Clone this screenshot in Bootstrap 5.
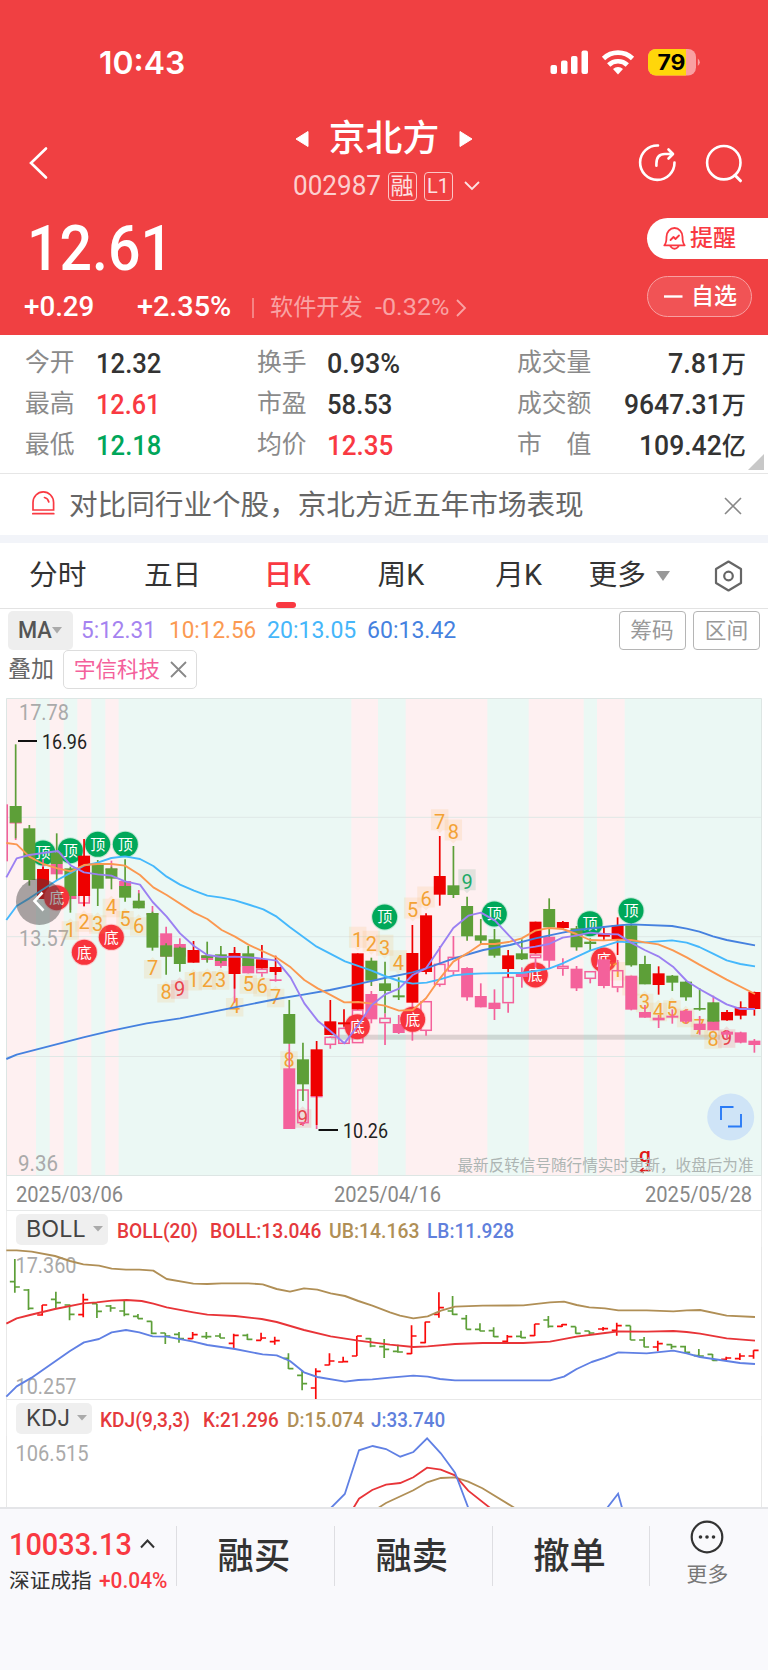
<!DOCTYPE html>
<html lang="zh-CN">
<head>
<meta charset="utf-8">
<meta name="viewport" content="width=device-width, initial-scale=1">
<title>京北方 002987</title>
<link rel="stylesheet" href="https://cdn.jsdelivr.net/npm/bootstrap@5.3.0/dist/css/bootstrap.min.css">
<style>
:root{--up:#f93942;--down:#00a65a;--brand:#f04042;--ink:#333;--muted:#8a8a8a;--num:Roboto,"Noto Sans CJK SC",sans-serif}
body{width:768px;height:1670px;overflow:hidden;font-family:var(--num);color:var(--ink);line-height:1;background:#fff}
svg{display:block;flex:none}
.fit{display:block;flex:none;white-space:nowrap}
.fit>span{display:inline-block;transform-origin:0 50%}
.cn{white-space:nowrap;flex:none}
.topbar{height:335px;background:var(--brand);color:#fff}
.status-row{height:106px;padding:46px 68px 0 99px}
.status-row>*{height:33px}
.clock{font:600 31.5px/33px Inter,sans-serif}
.nav-row{height:104px;padding:10px 25px 0 28px}
.nav-row>.side{flex:1 1 0}
.stock-name{font-size:36.8px;font-weight:500;height:46px;gap:20px;margin-left:-3px}
.stock-code{height:48px;font-size:27px;margin-left:3px;color:#fccfcf}
.boxed{border:1.5px solid #fbc6c6;border-radius:4px;height:29px;width:29px;color:#fde2e2}
.quote-big{height:78px;padding-left:27px;font-size:63.5px;font-weight:500}
.quote-row{height:39px;padding-left:24px;font-size:28.5px;font-weight:500}
.sector{color:#f9a3a4;font-weight:400}
.pills{padding-top:8px;gap:17px;width:121px}
.pill{height:41px;font-size:23px;font-weight:500;padding-left:16px}
.pill-a{background:#fff;color:var(--up);border-radius:21px 0 0 21px}
.pill-b{width:105px;border:1px solid #f8a0a1;background:#f15355;border-radius:21px;gap:8px}
.stats{height:139px;padding:8px 22px 0 25px;border-bottom:1px solid #e6e6e6;position:relative}
.stat-row{height:41px;display:grid;grid-template-columns:71px 161px 70px 190px 76px 1fr;font-size:28px;font-weight:500}
.stat-row .lbl{font-size:24.8px;font-weight:400;color:var(--muted)}
.stat-row .wan{font-size:25.5px}
.corner{position:absolute;right:4px;bottom:3px}
.notice{height:61px;padding:2px 26px 0 31px;font-size:28.6px;color:#666}
.band{height:8px;background:#f2f4f9}
.ktabs{height:66px;border-bottom:1px solid #e3e3e3;font-size:28.7px;padding:0 25px 0 29px}
.ktabs .tab{position:relative;height:65px}
.tab.on{color:var(--up);font-weight:500}
.tab.on::after{content:"";position:absolute;left:12px;bottom:0;width:20px;height:6px;border-radius:3px;background:var(--up)}
.ma-row{height:41px;padding:2px 8px 0;font-size:23.8px}
.chip{background:#eee;border-radius:5px;color:#555}
.ma-chip{width:65px;height:39px;padding-left:10px;font-weight:500}
.obtn{width:67px;height:39px;border:1.5px solid #b5b5b5;border-radius:4px;font-size:21.7px;color:#999}
.ov-row{height:48px;padding:0 8px 9px;font-size:23px;color:#666}
.ov-chip{height:39px;width:134px;border:1.5px solid #ddd;border-radius:5px;color:#f4619b;font-size:21.5px;padding-left:10px}
.dates{height:35px;border:1px solid #e6e8e8;border-width:0 1px 1px;margin:0 6px;padding:3px 9px 0 9px;font-size:21.8px;color:#888}
.ind-head{height:36px;margin:0 6px;border:1px solid #ececec;border-width:0 1px;font-size:19.6px;padding-left:9px;font-weight:500}
.ind-head>.fit{position:relative;top:2.5px}
.ind-chip{height:31px;background:#efefef;border-radius:5px;padding-left:10px;font:400 23px/31px Inter,sans-serif;color:#444;gap:7px}
.c-red{color:#e5393c}.c-br{color:#b08f56}.c-bl{color:#6080dc}
.actions{height:163px;background:#f9f9fc;border-top:2px solid #e4e5e8;padding-top:17px}
.act{width:157.8px;height:60px;border-left:1.5px solid #dedee2;font-size:36.3px;font-weight:500;padding:3px 3px 0 0}
.idx{width:176px;height:64px;padding-left:9px}
svg text{font-family:var(--num)}
</style>
</head>
<body>
<header class="topbar">
  <div class="status-row d-flex align-items-start justify-content-between">
    <div class="clock fit" data-w="86"><span>10:43</span></div>
    <div class="d-flex align-items-center">
      <svg width="152" height="33" viewBox="548 46 152 33">
        <g fill="#fff"><rect x="550.5" y="65" width="6.5" height="9" rx="2"/><rect x="561" y="60.5" width="6.5" height="13.5" rx="2"/><rect x="571" y="56" width="6.5" height="18" rx="2"/><rect x="581.5" y="50.5" width="6.5" height="23.500" rx="2"/></g>
        <g fill="none" stroke="#fff" stroke-width="4.700"><path d="M603.500 58.500a21 21 0 0 1 29 0"/><path d="M608.700 65a13.400 13.400 0 0 1 18.600 0"/></g>
        <path d="M618 74.500l-5-5.500a7.500 7.500 0 0 1 10 0z" fill="#fff"/>
        <rect x="648" y="49" width="48" height="26.500" rx="8" fill="#f9a0a1"/>
        <path d="M656 49h30v26.500h-30a8 8 0 0 1-8-8V57a8 8 0 0 1 8-8z" fill="#ffd60a"/>
        <path d="M697.800 58.500q4 3.700 0 7.500z" fill="#f9a0a1"/>
        <text x="657.500" y="70" font-size="21" font-weight="700" fill="#000" textLength="28" lengthAdjust="spacingAndGlyphs" style="font-family:Inter,sans-serif">79</text>
      </svg>
    </div>
  </div>
  <div class="nav-row d-flex align-items-center">
    <div class="side"><svg width="22" height="34" fill="none" stroke="#fff" stroke-width="2.600" stroke-linecap="round"><path d="M18 2.500L3 17l15 14.500"/></svg></div>
    <div>
      <div class="stock-name d-flex align-items-center justify-content-center">
        <svg width="14" height="18"><path d="M13 1.500v15L1 9z" fill="#fff" stroke="#fff" stroke-linejoin="round"/></svg>
        <span class="cn">京北方</span>
        <svg width="14" height="18"><path d="M1 1.500v15L13 9z" fill="#fff" stroke="#fff" stroke-linejoin="round"/></svg>
      </div>
      <div class="stock-code d-flex align-items-center">
        <div class="fit" data-w="88"><span>002987</span></div>
        <div class="boxed d-flex align-items-center justify-content-center" style="font-size:23px;margin-left:7px">融</div>
        <div class="boxed d-flex align-items-center justify-content-center" style="font-size:20px;margin-left:7px">L1</div>
        <svg style="margin-left:9px" width="20" height="14" fill="none" stroke="#fde2e2" stroke-width="1.800"><path d="M3 3l7 7 7-7"/></svg>
      </div>
    </div>
    <div class="side d-flex justify-content-end">
      <svg width="106" height="42" viewBox="638 142 106 42" fill="none" stroke="#fff" stroke-width="2.600" stroke-linecap="round" stroke-linejoin="round">
        <path d="M659 145.500a17.200 17.200 0 1 0 16.500 17"/><path d="M657.400 165.800v-2q0-9.800 8.500-9.800h7.500M669.500 149.500l4.500 4.500-4.500 4.500"/>
        <circle cx="724.800" cy="162.700" r="16.700"/><path d="M736 175.300l5.500 5.500" stroke-width="3"/>
      </svg>
    </div>
  </div>
  <div class="d-flex justify-content-between">
    <div>
      <div class="quote-big d-flex align-items-center"><div class="fit" data-w="146"><span>12.61</span></div></div>
      <div class="quote-row d-flex align-items-center">
        <div class="fit" data-w="70"><span>+0.29</span></div>
        <div class="fit" data-w="94" style="margin-left:43px"><span>+2.35%</span></div>
        <svg width="2" height="20" style="margin-left:21px"><path d="M1 0v20" stroke="#f79a9b" stroke-width="1.500"/></svg>
        <span class="cn sector" style="font-size:23.200px;margin-left:16px">软件开发</span>
        <div class="fit sector" data-w="74" style="font-size:24.500px;margin-left:12px"><span>-0.32%</span></div>
        <svg width="12" height="20" style="margin-left:6px" fill="none" stroke="#f9a3a4" stroke-width="1.800"><path d="M2 2l8 8-8 8"/></svg>
      </div>
    </div>
    <div class="pills d-flex flex-column">
      <div class="pill pill-a d-flex align-items-center">
        <svg width="23" height="25" viewBox="0 0 23 25" fill="none" stroke="#f93942" stroke-width="1.800" stroke-linejoin="round" stroke-linecap="round" style="margin-right:4px"><path d="M1.300 19.300h20.400q-2.200-2-2.200-8.500a8 8.800 0 0 0-16 0q0 6.500-2.200 8.500zM7.500 20.500q4 4.500 8 0"/><path d="M7.500 14l3-3 2 2 3.500-3.500"/></svg>
        <span class="cn">提醒</span>
      </div>
      <div class="pill pill-b d-flex align-items-center"><svg width="19" height="3"><path d="M0 1.500h18.500" stroke="#fff" stroke-width="2.400"/></svg><span class="cn">自选</span></div>
    </div>
  </div>
</header>

<section class="stats">
  <div class="stat-row align-items-center"><span class="lbl">今开</span><div class="fit" data-w="65"><span>12.32</span></div><span class="lbl">换手</span><div class="fit" data-w="73"><span>0.93%</span></div><span class="lbl">成交量</span><div class="fit ms-auto" data-w="78"><span>7.81<span class="wan">万</span></span></div></div>
  <div class="stat-row align-items-center"><span class="lbl">最高</span><div class="fit" data-w="64" style="color:var(--up)"><span>12.61</span></div><span class="lbl">市盈</span><div class="fit" data-w="65"><span>58.53</span></div><span class="lbl">成交额</span><div class="fit ms-auto" data-w="122"><span>9647.31<span class="wan">万</span></span></div></div>
  <div class="stat-row align-items-center"><span class="lbl">最低</span><div class="fit" data-w="65" style="color:var(--down)"><span>12.18</span></div><span class="lbl">均价</span><div class="fit" data-w="66" style="color:var(--up)"><span>12.35</span></div><span class="lbl">市　值</span><div class="fit ms-auto" data-w="107"><span>109.42<span class="wan">亿</span></span></div></div>
  <svg class="corner" width="16" height="16"><path d="M16 0v16H0z" fill="#c8c8c8"/></svg>
</section>

<section class="notice d-flex align-items-center">
  <svg width="25" height="25" viewBox="0 0 25 25" fill="none" stroke="#f93942" stroke-width="1.700" stroke-linecap="round" style="margin-top:-4px"><path d="M2 19V11.500a10.200 10.500 0 0 1 20.600 0V19zM1.800 22.700h21M13.500 6.500q3.500.8 4.300 4.500"/></svg>
  <span class="cn" style="margin-left:13px">对比同行业个股，京北方近五年市场表现</span>
  <svg class="ms-auto" width="18" height="18" stroke="#888" stroke-width="1.600"><path d="M1 1l16 16M17 1L1 17"/></svg>
</section>
<div class="band"></div>

<nav class="ktabs d-flex align-items-center">
  <div class="tab d-flex align-items-center">分时</div>
  <div class="tab d-flex align-items-center" style="margin-left:57.500px">五日</div>
  <div class="tab on d-flex align-items-center" style="margin-left:62.500px">日K</div>
  <div class="tab d-flex align-items-center" style="margin-left:67px">周K</div>
  <div class="tab d-flex align-items-center" style="margin-left:71px">月K</div>
  <div class="tab d-flex align-items-center" style="margin-left:46.500px">更多</div>
  <svg width="14" height="10" style="margin-left:10.500px"><path d="M0 0h14L7 10z" fill="#999"/></svg>
  <svg class="ms-auto" width="29" height="32" fill="none" stroke="#666" stroke-width="2.200" stroke-linejoin="round"><path d="M14.500 1.500L27 9v14l-12.500 7.500L2 23V9z"/><circle cx="14.500" cy="16" r="4.300"/></svg>
</nav>

<div class="ma-row d-flex align-items-center">
  <div class="chip ma-chip d-flex align-items-center"><div class="fit" data-w="34"><span>MA</span></div><svg width="10" height="7"><path d="M0 0h10L5 6.500z" fill="#aaa"/></svg></div>
  <div class="fit" data-w="75" style="margin-left:7.500px;color:#a583f0"><span>5:12.31</span></div>
  <div class="fit" data-w="87" style="margin-left:13.500px;color:#fb9a52"><span>10:12.56</span></div>
  <div class="fit" data-w="89" style="margin-left:11px;color:#45b6fa"><span>20:13.05</span></div>
  <div class="fit" data-w="89" style="margin-left:10.500px;color:#4581df"><span>60:13.42</span></div>
  <div class="obtn ms-auto d-flex align-items-center justify-content-center">筹码</div>
  <div class="obtn d-flex align-items-center justify-content-center" style="margin-left:7.500px">区间</div>
</div>
<div class="ov-row d-flex align-items-center">
  <span class="cn">叠加</span>
  <div class="ov-chip d-flex align-items-center" style="margin-left:9px"><span class="cn">宇信科技</span><svg style="margin-left:10px" width="17" height="17" stroke="#888" stroke-width="1.800"><path d="M1 1l15 15M16 1L1 16"/></svg></div>
</div>

<svg id="main" width="768" height="478" viewBox="0 698 768 478"></svg>
<div class="dates d-flex align-items-center justify-content-between">
  <div class="fit" data-w="107"><span>2025/03/06</span></div><div class="fit" data-w="107" style="margin-right:-6px"><span>2025/04/16</span></div><div class="fit" data-w="107"><span>2025/05/28</span></div>
</div>
<div class="ind-head d-flex align-items-center">
  <div class="ind-chip d-flex align-items-center" style="width:92px"><div class="fit" data-w="60"><span>BOLL</span></div><svg width="10" height="6"><path d="M0 0h10L5 5.500z" fill="#aaa"/></svg></div>
  <div class="fit c-red" data-w="81" style="margin-left:8.500px"><span>BOLL(20)</span></div>
  <div class="fit c-red" data-w="111" style="margin-left:12.500px"><span>BOLL:13.046</span></div>
  <div class="fit c-br" data-w="90" style="margin-left:8px"><span>UB:14.163</span></div>
  <div class="fit c-bl" data-w="87" style="margin-left:7.500px"><span>LB:11.928</span></div>
</div>
<svg id="boll" width="768" height="153" viewBox="0 1247 768 153"></svg>
<div class="ind-head d-flex align-items-center">
  <div class="ind-chip d-flex align-items-center" style="width:76px"><div class="fit" data-w="44"><span>KDJ</span></div><svg width="10" height="6"><path d="M0 0h10L5 5.500z" fill="#aaa"/></svg></div>
  <div class="fit c-red" data-w="90" style="margin-left:8px"><span>KDJ(9,3,3)</span></div>
  <div class="fit c-red" data-w="76" style="margin-left:13px"><span>K:21.296</span></div>
  <div class="fit c-br" data-w="77" style="margin-left:8px"><span>D:15.074</span></div>
  <div class="fit c-bl" data-w="74" style="margin-left:6.500px"><span>J:33.740</span></div>
</div>
<svg id="kdj" width="768" height="71" viewBox="0 1436 768 71"></svg>

<footer class="actions d-flex">
  <div class="idx">
    <div class="d-flex align-items-center" style="height:36px;font-size:31px;font-weight:500;color:var(--up)"><div class="fit" data-w="123"><span>10033.13</span></div><svg style="margin-left:8px" width="15" height="10" fill="none" stroke="#333" stroke-width="2"><path d="M1 8.500l6.500-7 6.500 7"/></svg></div>
    <div class="d-flex align-items-center" style="height:38px;font-size:20.700px"><span class="cn">深证成指</span><div class="fit" data-w="68" style="margin-left:7px;color:var(--up);font-size:21.500px;font-weight:500"><span>+0.04%</span></div></div>
  </div>
  <div class="act d-flex align-items-center justify-content-center">融买</div>
  <div class="act d-flex align-items-center justify-content-center">融卖</div>
  <div class="act d-flex align-items-center justify-content-center">撤单</div>
  <div class="act d-flex flex-column align-items-center" style="width:118px;font-size:20.800px;font-weight:400;color:#777">
    <svg width="36" height="36" viewBox="0 0 36 36" style="margin-top:-10px"><circle cx="18" cy="18" r="15.300" fill="none" stroke="#333" stroke-width="2.200"/><g fill="#333"><circle cx="11.500" cy="18" r="1.800"/><circle cx="18" cy="18" r="1.800"/><circle cx="24.500" cy="18" r="1.800"/></g></svg>
    <span style="margin-top:10px">更多</span>
  </div>
</footer>

<script src="https://cdn.jsdelivr.net/npm/bootstrap@5.3.0/dist/js/bootstrap.bundle.min.js"></script>
<script>
document.querySelectorAll('.fit').forEach(function(el){
  var s=el.firstElementChild,w=+el.dataset.w,n=s.offsetWidth;
  el.style.width=w+'px';s.style.transform='scaleX('+(w/n)+')';
});
// Chart data is kept in thirds of a pixel; T/U/V turn it into view coordinates.
function T(v){return +(v/3).toFixed(2)}
function U(v){return +(690+v/3).toFixed(2)}
function V(v){return +(1210+v/3).toFixed(2)}
function poly(s,f,c){return '<polyline fill="none" stroke="'+c+'" stroke-width="1.9" stroke-linejoin="round" points="'+s.trim().split(' ').map(function(p){p=p.split(',');return T(p[0])+','+f(p[1])}).join(' ')+'"/>'}
function txt(x,y,w,s,t,c,e){return '<text x="'+x+'" y="'+y+'" font-size="'+s+'" fill="'+c+'" '+(w?'textLength="'+w+'" lengthAdjust="spacingAndGlyphs" ':'')+(e||'')+'>'+t+'</text>'}
var RED='#ee0000',GRN='#5d9f38',PNK='#f4619b',h='';
h+='<rect x="6.500" y="698.500" width="755" height="478" fill="#ebf8f4"/>';
[[19,108],[149,191],[232,274],[316,356],[1054,1134],[1217,1462],[1586,1751],[1791,1874]].forEach(function(a){h+='<rect x="'+T(a[0])+'" y="698.500" width="'+T(a[1]-a[0])+'" height="478" fill="#fef0f1"/>'});
h+='<path d="M6.500 817.300h755M6.500 936.700h755M6.500 1056.500h755" stroke="#dfe8e6"/><path d="M6.500 1176V698.500h755V1176M6.500 1175.500h755" fill="none" stroke="#dde6e4"/>';
h+='<rect x="331" y="1034.700" width="389" height="5" fill="#000" opacity=".13"/>';
h+=txt(19,720,50,21.500,'17.78','#aaa')+txt(19,945.700,50,21.500,'13.57','#aaa')+txt(18,1170.700,40,21.500,'9.36','#aaa');
h+='<path d="M18 741h19M318.500 1130h19.500" stroke="#111" stroke-width="1.800"/>'+txt(42,748.800,45,20,'16.96','#222')+txt(343,1137.500,45,20,'10.26','#222');
// turning-point badges
function badge(a){var c=a[0]=='顶'?'#00a85a':'#f8333c';return '<circle cx="'+T(a[1])+'" cy="'+U(a[2])+'" r="13.500" fill="'+c+'" opacity=".2"/><circle cx="'+T(a[1])+'" cy="'+U(a[2])+'" r="12.500" fill="'+c+'"/>'+txt(T(a[1]),U(a[2]+16),0,15,a[0],'#fff','text-anchor="middle"')}
[['顶',129,489],['顶',211,482],['顶',293,463],['顶',376,463],['顶',1154,681],['顶',1483,672],['顶',1770,701],['顶',1893,662],['底',253,787],['底',334,742],['底',1606,855],['底',1811,810]].forEach(function(a){h+=badge(a)});
// sequence counters: x, y, digit, pointer direction
[[211,718,1,1],[252,694,2,1],[293,700,3,1],[334,650,4,1],[375,687,5,1],[416,706,6,1],[458,834,7,1],[498,906,8,1],[539,895,9,1],[580,870,1,1],[622,868,2,1],[662,868,3,1],[704,948,4,1],[745,880,5,1],[786,888,6,1],[827,920,7,1],[867,1108,8,1],[908,1282,9,1],[1073,748,1,0],[1114,760,2,0],[1154,772,3,0],[1195,818,4,0],[1238,660,5,0],[1278,627,6,0],[1319,395,7,0],[1360,426,8,0],[1401,575,9,0],[1852,840,1,1],[1893,885,2,1],[1934,935,3,1],[1975,962,4,1],[2016,955,5,1],[2057,980,6,1],[2098,1010,7,1],[2139,1045,8,1],[2180,1042,9,1]].forEach(function(a){
  var n=a[2]==9,c=n?(a[3]?'#e8444c':'#1eaa68'):'#f3a234',b=n?(a[3]?'#f0485028':'#2a8a6022'):'#f8a84424',x=T(a[0]),y=U(a[1]),p=a[3]?'M'+(x-8.7)+' '+(y-8)+'h5.700l3-3 3 3h5.700v18.500h-17.400z':'M'+(x-8.7)+' '+(y+8.500)+'v-21h17.400v21h-5.700l-3 3-3-3z';
  h+='<path d="'+p+'" fill="'+b+'"/>'+txt(x,y+7.3,0,20,a[2],c,'text-anchor="middle"')});
// candles: index, wick top, body top, body bottom, wick bottom
function candle(a,col,hollow){var x=T(47+41.04*a[0]),r='<path d="M'+x+' '+U(a[1])+'V'+U(hollow?a[2]:a[4])+(hollow?'M'+x+' '+U(a[3])+'V'+U(a[4]):'')+'" stroke="'+col+'" stroke-width="1.700"/>';
  return r+(hollow?'<rect x="'+(x-5.2)+'" y="'+(U(a[2])+.7)+'" width="10.400" height="'+Math.max(1,T(a[3]-a[2])-1.4)+'" fill="none" stroke="'+col+'" stroke-width="1.500"/>':'<rect x="'+(x-6)+'" y="'+U(a[2])+'" width="12" height="'+Math.max(1.5,T(a[3]-a[2]))+'" fill="'+col+'"/>')}
h+='<rect x="6.500" y="'+U(343)+'" width="1.500" height="57" fill="#f4619b"/>';
[[0,395,396,399,450],[2,508,540,545,545],[3,522,522,553,553],[4,610,615,627,660],[7,512,536,540,545],[8,573,573,600,600],[9,600,640,645,650],[10,648,669,675,680],[11,710,730,800,800],[12,745,762,800,800],[14,790,796,810,815],[15,800,813,828,833],[16,780,800,830,938],[17,800,820,850,850],[19,840,868,873,875],[20,1061,1135,1317,1317],[22,1200,1215,1222,1317],[26,903,912,988,1000],[28,975,1002,1029,1032],[29,938,1014,1019,1052],[33,832,834,922,932],[34,880,918,952,952],[35,898,938,957,990],[37,832,848,861,893],[39,735,740,812,835],[41,828,836,895,903],[43,808,808,888,895],[45,857,857,959,961],[46,945,966,983,983],[47,975,983,991,1014],[48,958,977,983,1001],[49,958,962,995,1001],[50,978,1001,1020,1034],[51,917,990,1021,1021],[52,1020,1025,1034,1045],[53,1025,1027,1058,1060],[54,1047,1052,1065,1088]].forEach(function(a){h+=candle(a,PNK)});
[[5,610,612,641,650],[18,835,836,850,860],[21,1198,1198,1300,1308],[23,1038,1040,1065,1076],[24,1010,1013,1062,1062],[25,958,958,1060,1060],[27,970,983,1000,1065],[30,933,933,1023,1037],[31,768,821,885,890],[32,738,800,845,855],[36,850,860,940,968],[38,790,793,805,832],[40,805,827,837,857],[42,843,843,867,880],[44,810,840,893,907]].forEach(function(a){h+=candle(a,PNK,true)});
h+=badge(['底',1072,1010])+badge(['底',1238,988]);
[[0,0,163,348,398,445],[1,0,405,415,570,587],[2,1,530,537,627,627],[3,0,430,488,522,570],[4,0,530,535,618,668],[5,1,447,497,618,648],[6,0,510,524,596,648],[7,0,530,535,566,598],[8,0,508,588,623,635],[9,0,610,632,655,655],[10,0,665,669,773,782],[11,0,760,766,800,854],[12,0,770,773,822,845],[13,1,753,780,818,818],[14,0,755,796,804,818],[15,0,768,793,813,820],[16,1,771,789,852,896],[17,0,768,790,828,828],[18,1,765,808,835,835],[19,1,797,831,846,855],[20,0,930,972,1061,1061],[21,0,1058,1108,1183,1233],[22,1,1053,1078,1218,1305],[23,1,930,994,1035,1035],[24,1,958,997,1003,1010],[25,1,790,790,958,958],[26,0,803,812,872,888],[27,0,815,880,903,970],[28,0,862,916,922,930],[29,1,705,789,938,938],[30,1,670,676,846,853],[31,1,438,558,614,647],[32,0,468,586,615,624],[33,0,620,648,739,752],[34,0,687,736,752,762],[35,0,717,748,797,803],[36,1,780,796,837,862],[37,0,748,790,808,810],[38,1,695,695,790,790],[39,0,625,657,712,740],[40,1,693,696,714,720],[41,0,708,715,772,782],[42,0,745,755,762,782],[43,1,714,730,740,752],[44,1,682,706,748,795],[45,0,700,706,826,830],[46,0,797,822,883,883],[47,1,829,850,885,914],[48,0,855,857,878,903],[49,0,873,875,922,932],[50,0,895,954,959,962],[51,0,937,937,995,995],[52,1,960,966,991,992],[53,1,934,952,977,988],[54,1,905,906,957,977]].forEach(function(a){h+=candle([a[0],a[2],a[3],a[4],a[5]],a[1]?RED:GRN)});
h+=badge(['底',170,623]);
h+=poly('19,1107 50,1094 250,1042 335,1022 440,1000 540,985 700,953 830,927 910,914 990,900 1070,883 1154,864 1238,847 1278,835 1360,806 1450,780 1530,765 1606,745 1688,728 1729,720 1811,711 1854,706 1893,703 2016,708 2060,716 2098,725 2139,739 2180,750 2265,766',U,'#4581df');
h+=poly('19,690 50,648 88,625 172,570 213,548 252,527 293,518 334,504 375,499 420,507 460,528 500,560 540,584 582,602 622,617 665,623 705,631 750,645 790,658 830,680 870,712 950,770 1035,814 1115,842 1154,858 1197,873 1238,881 1280,878 1320,868 1360,856 1405,852 1450,850 1530,849 1565,849 1606,843 1647,836 1688,820 1770,782 1854,755 1893,757 1934,757 2016,751 2060,758 2098,771 2139,791 2180,811 2221,822 2265,829',U,'#45b8fc');
h+=poly('19,459 50,463 88,500 130,522 172,535 213,544 252,525 293,522 334,522 375,527 420,555 460,592 500,615 582,668 622,687 665,720 705,740 745,764 830,803 872,832 913,870 953,895 990,914 1033,937 1075,936 1115,941 1154,947 1197,962 1238,960 1278,925 1320,865 1360,815 1405,788 1443,762 1485,762 1530,755 1565,745 1606,722 1647,714 1688,717 1729,732 1770,750 1811,751 1854,749 1893,750 1934,757 1975,763 2019,781 2060,802 2098,824 2180,869 2265,912',U,'#fb9850');
h+=poly('19,562 50,505 88,495 130,489 174,483 213,527 252,547 293,553 334,557 375,574 420,584 458,636 500,680 540,730 582,768 622,795 665,801 705,800 745,802 780,805 830,812 872,863 913,940 953,992 990,1022 1033,1060 1075,1005 1115,945 1154,914 1197,896 1238,855 1278,835 1320,773 1360,714 1405,677 1443,668 1485,692 1530,740 1565,776 1606,770 1647,762 1688,743 1729,737 1770,728 1811,732 1854,733 1893,758 1934,780 1975,799 2019,830 2060,873 2098,897 2139,920 2180,943 2221,957 2265,957',U,'#9b80f2');
h+='<circle cx="39.300" cy="901.700" r="23.300" fill="#404040" opacity=".45"/><path d="M42.500 892.500l-8 8.500 9 9.500" fill="none" stroke="#fff" stroke-width="2.600"/>';
h+='<circle cx="730.700" cy="1117" r="23.500" fill="#cfe4f7"/><path d="M721 1120v-13h12.500M741 1114v12.500h-13" fill="none" stroke="#2a7bf6" stroke-width="1.900"/>';
h+=txt(639,1161.500,0,21,'q','#e01a1a','font-weight="500"')+'<path d="M650.500 1170.500h-10m3-2.500l-3 2.500 3 2.500" fill="none" stroke="#e01a1a" stroke-width="1.400"/>';
h+=txt(457.500,1171.300,296,15.500,'最新反转信号随行情实时更新，收盘后为准','#adb5b3');
document.getElementById('main').innerHTML=h;

// Bollinger panel
h='<path d="M6.500 1247v153M761.500 1247v153M6.500 1399.500h755" stroke="#e8e8e8"/>'+txt(15.500,1273,61,21.500,'17.360','#aaa')+txt(15.500,1393.700,61,21.500,'10.257','#aaa');
// bars: up flag, high, low, open, close
[[0,147,248,215,231],[0,237,300,240,295],[1,285,317,315,285],[0,245,295,268,278],[0,283,331,285,313],[1,251,322,314,269],[0,281,324,281,304],[0,285,305,288,294],[0,273,319,303,313],[0,312,326,319,326],[0,334,373,334,370],[0,369,402,369,378],[0,366,398,373,386],[1,366,387,386,374],[0,366,387,380,380],[0,370,384,378,384],[1,371,415,400,376],[0,371,390,376,388],[1,368,391,391,384],[1,380,404,395,392],[0,430,477,445,476],[0,480,541,496,521],[1,475,567,534,484],[1,430,466,465,453],[1,440,457,456,455],[1,378,438,438,378],[0,384,412,386,408],[0,387,444,410,418],[0,404,428,424,426],[1,346,432,431,378],[1,335,400,398,336],[1,247,323,313,293],[0,258,315,303,313],[0,315,358,326,358],[0,340,364,358,363],[0,352,381,362,380],[1,375,400,394,380],[0,362,384,379,383],[1,342,378,377,342],[0,318,353,330,349],[1,342,351,349,344],[0,350,371,350,370],[0,363,372,363,369],[1,351,362,357,356],[1,338,377,361,347],[0,347,390,347,390],[0,381,412,390,411],[1,392,424,411,401],[0,402,418,404,410],[0,407,430,410,427],[0,417,440,437,438],[0,432,452,433,451],[1,440,450,448,444],[1,430,450,446,438],[1,421,446,438,421]].forEach(function(a,i){var x=T(44.5+41.04*i);
  h+='<path d="M'+x+' '+V(a[1])+'V'+V(a[2])+'M'+(x-5)+' '+V(a[3])+'H'+x+'M'+x+' '+V(a[4])+'h5" stroke="'+(a[0]?'#fa0a0a':GRN)+'" stroke-width="1.700"/>'});
h+=poly('19,121 50,121 95,125 165,138 210,153 250,163 297,167 335,176 378,179 418,179 460,182 500,207 580,221 622,222 665,220 745,220 788,223 830,237 870,245 912,235 952,239 992,250 1035,258 1075,273 1117,287 1170,307 1200,317 1240,325 1283,319 1323,302 1365,290 1448,287 1570,286 1650,277 1692,275 1730,285 1768,292 1815,295 1855,301 1940,301 2020,304 2060,301 2100,300 2180,317 2265,321',V,'#b08f56');
h+=poly('19,341 50,325 90,315 165,297 250,280 290,277 335,272 380,270 425,273 460,281 500,292 580,307 622,314 705,318 785,327 830,336 912,360 992,379 1075,392 1170,404 1240,411 1283,409 1365,402 1448,399 1570,399 1650,395 1730,380 1815,369 1855,364 1940,365 2020,363 2060,366 2100,371 2180,385 2265,392',V,'#e83438');
h+=poly('19,560 50,529 95,503 210,423 252,397 297,387 335,367 378,360 418,367 458,379 500,380 580,395 622,405 705,417 745,425 788,433 830,436 870,453 912,487 952,501 1035,515 1075,510 1117,508 1170,503 1240,497 1283,500 1320,507 1365,511 1650,511 1692,500 1730,477 1775,456 1815,443 1855,427 1940,430 2020,422 2060,430 2100,441 2180,453 2220,459 2265,462',V,'#6080e4');
document.getElementById('boll').innerHTML=h;

// KDJ panel
function K(s,c){return '<polyline fill="none" stroke="'+c+'" stroke-width="1.800" points="'+s.split(' ').map(function(p){p=p.split(',');return (p[0]/2.0417).toFixed(1)+','+(1395+p[1]/3).toFixed(1)}).join(' ')+'"/>'}
h='<path d="M6.500 1436v72M761.500 1436v72" stroke="#e8e8e8"/>'+txt(15.500,1461,73,21.500,'106.515','#aaa');
h+=K('773,338 788,324 844,286 872,262 900,249 929,247 956,260 985,280 1050,338','#b08f56')+K('722,338 733,311 760,285 788,269 817,264 844,247 872,218 900,224 929,241 956,287 1000,338','#e83438')+K('676,338 704,297 733,166 761,153 788,162 817,185 844,171 872,130 900,175 929,233 956,338','#6080e4')+K('1240,338 1262,296 1270,338','#6080e4');
document.getElementById('kdj').innerHTML=h;
</script>
</body>
</html>
